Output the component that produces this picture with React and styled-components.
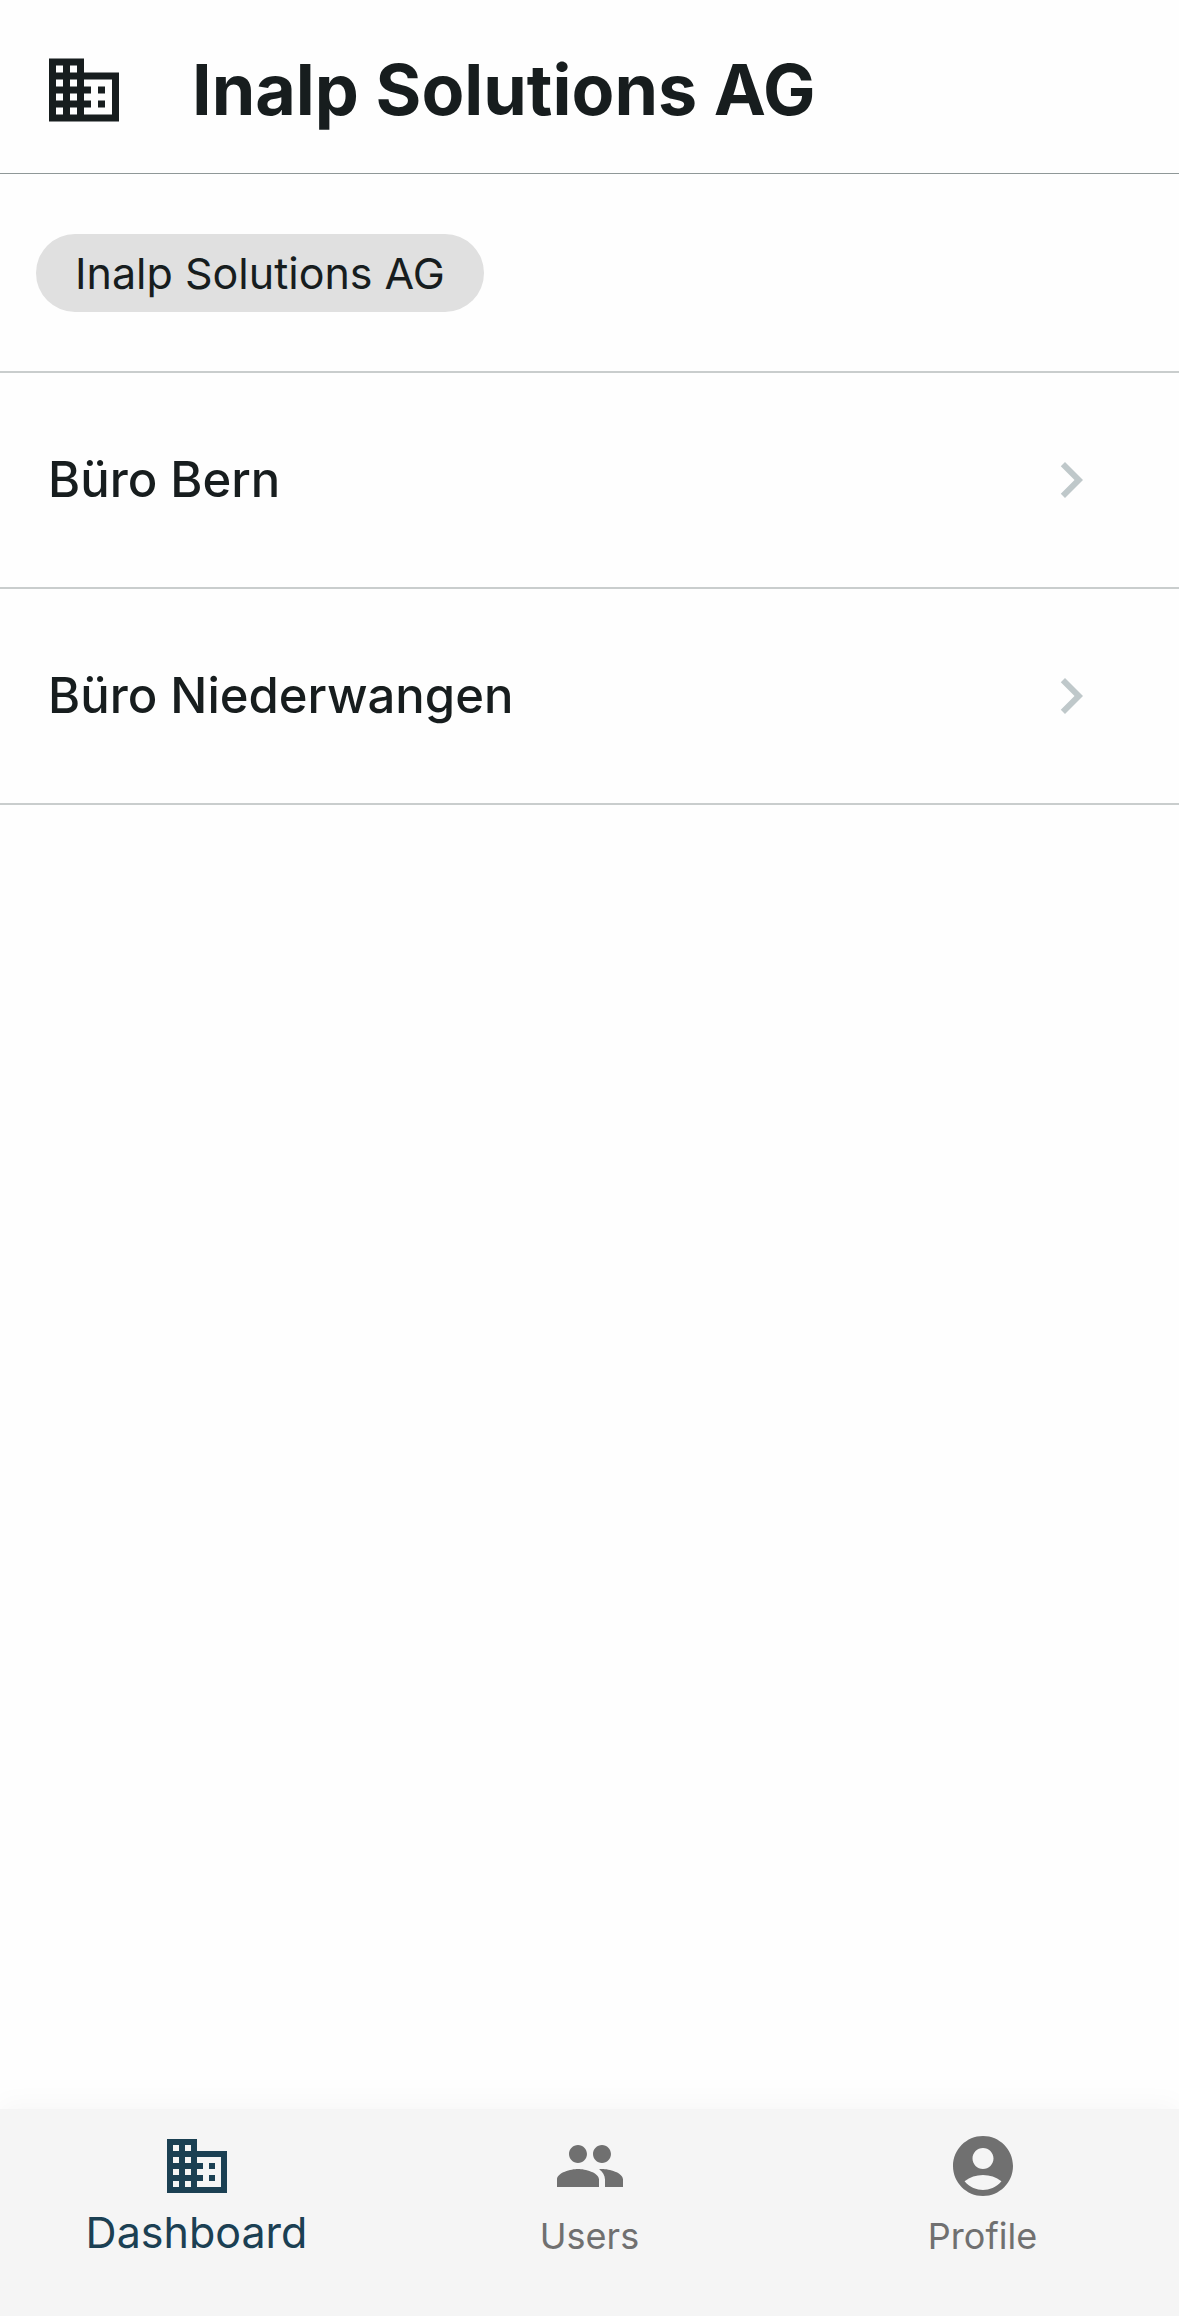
import React from 'react'
import styled, { createGlobalStyle } from 'styled-components'
import { MdAccountCircle, MdBusiness, MdChevronRight, MdPeople } from 'react-icons/md'

const offices = [
  { id: 1, name: 'Büro Bern' },
  { id: 2, name: 'Büro Niederwangen' },
]

const tabs = [
  { id: 'dashboard', label: 'Dashboard', Icon: MdBusiness },
  { id: 'users', label: 'Users', Icon: MdPeople },
  { id: 'profile', label: 'Profile', Icon: MdAccountCircle },
]

const App = () => {
  const [current, setCurrent] = React.useState('dashboard')

  return (
    <>
      <GlobalStyle />
      <Page>
        <Header>
          <MdBusiness size={84} aria-hidden="true" />
          <Title>Inalp Solutions AG</Title>
        </Header>
        <Main>
          <Breadcrumbs>
            <Chip type="button">Inalp Solutions AG</Chip>
          </Breadcrumbs>
          <OfficeList>
            {offices.map((office) => (
              <li key={office.id}>
                <OfficeRow type="button">
                  {office.name}
                  <MdChevronRight size={72} aria-hidden="true" />
                </OfficeRow>
              </li>
            ))}
          </OfficeList>
        </Main>
        <BottomNav>
          {tabs.map(({ id, label, Icon }) => (
            <Tab key={id} type="button" $active={id === current} onClick={() => setCurrent(id)}>
              <Icon size={72} aria-hidden="true" />
              <TabLabel $active={id === current}>{label}</TabLabel>
            </Tab>
          ))}
        </BottomNav>
      </Page>
    </>
  )
}

const GlobalStyle = createGlobalStyle`
  * {
    box-sizing: border-box;
  }
  body {
    margin: 0;
    background: #fefefe;
    color: #171d1e;
    font-family: Inter, "Liberation Sans", sans-serif;
  }
  button {
    border: 0;
    background: none;
    color: inherit;
    font: inherit;
    cursor: pointer;
  }
`

const Page = styled.div`
  display: flex;
  flex-direction: column;
  min-height: 100vh;
`

const Header = styled.header`
  display: flex;
  align-items: center;
  gap: 66px;
  padding: 48px 42px 41px;
  border-bottom: 1px solid #8f9898;
`

const Title = styled.h1`
  margin: 0;
  font-size: 70px;
  line-height: 84px;
  font-weight: 700;
`

const Main = styled.main`
  flex: 1;
`

const Breadcrumbs = styled.nav`
  display: flex;
  padding: 60px 36px 59px;
  border-bottom: 2px solid #c9cdcd;
`

const Chip = styled.button`
  padding: 0 39px;
  border-radius: 39px;
  background: #e0e0e0;
  font-size: 43px;
  line-height: 78px;
`

const OfficeList = styled.ul`
  margin: 0;
  padding: 0;
  list-style: none;
`

const OfficeRow = styled.button`
  display: flex;
  align-items: center;
  justify-content: space-between;
  width: 100%;
  padding: 71px 72px 71px 48px;
  border-bottom: 2px solid #c9cdcd;
  font-size: 49px;
  line-height: 72px;
  font-weight: 500;
  text-align: left;

  svg {
    color: #bfc8ca;
  }
`

const BottomNav = styled.nav`
  display: flex;
  height: 207px;
  background: #f5f5f5;
  box-shadow: 0 -6px 24px rgba(0, 0, 0, 0.03);
`

const Tab = styled.button`
  display: flex;
  flex: 1;
  flex-direction: column;
  align-items: center;
  padding: 21px 0 0;
  color: ${({ $active }) => ($active ? '#1b4053' : '#707070')};
`

const TabLabel = styled.span`
  font-size: ${({ $active }) => ($active ? '43px' : '36px')};
  line-height: ${({ $active }) => ($active ? '60px' : '68px')};
`

export default App
